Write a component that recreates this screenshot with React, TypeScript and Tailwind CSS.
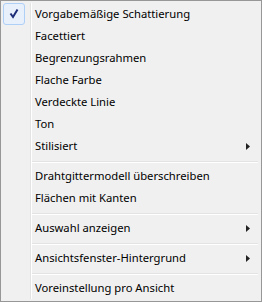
import React from "react";

type Entry =
  | { kind: "item"; label: string; checked?: boolean; sub?: boolean }
  | { kind: "sep" };

const entries: Entry[] = [
  { kind: "item", label: "Vorgabemäßige Schattierung", checked: true },
  { kind: "item", label: "Facettiert" },
  { kind: "item", label: "Begrenzungsrahmen" },
  { kind: "item", label: "Flache Farbe" },
  { kind: "item", label: "Verdeckte Linie" },
  { kind: "item", label: "Ton" },
  { kind: "item", label: "Stilisiert", sub: true },
  { kind: "sep" },
  { kind: "item", label: "Drahtgittermodell überschreiben" },
  { kind: "item", label: "Flächen mit Kanten" },
  { kind: "sep" },
  { kind: "item", label: "Auswahl anzeigen", sub: true },
  { kind: "sep" },
  { kind: "item", label: "Ansichtsfenster-Hintergrund", sub: true },
  { kind: "sep" },
  { kind: "item", label: "Voreinstellung pro Ansicht" },
];

function Gutter() {
  return (
    <div className="flex h-full">
      <div className="w-px bg-[#e2e3e3]" />
      <div className="w-px bg-white" />
    </div>
  );
}

export default function App() {
  return (
    <div
      className="w-[262px] h-[302px] border border-[#979797] bg-[#f0f0f0] p-[2px] flex flex-col text-[11.25px] text-black"
      style={{ fontFamily: '"Segoe UI", "Noto Sans", "Open Sans", sans-serif' }}
    >
      {entries.map((e, i) =>
        e.kind === "sep" ? (
          <div key={i} className="flex h-[8px]">
            <div className="w-[27px]" />
            <Gutter />
            <div className="flex-1 flex flex-col pt-[4px] pr-[1px]">
              <div className="h-px bg-[#e2e3e3]" />
              <div className="h-px bg-white" />
            </div>
          </div>
        ) : (
          <div key={i} className="flex h-[22px] items-stretch">
            <div className="w-[27px] flex items-start">
              {e.checked ? (
                <div className="w-[22px] h-[22px] rounded-[3px] border border-[#aecff7] bg-[#e8f0fb] flex items-center justify-center">
                  <svg width="14" height="14" viewBox="0 0 14 14">
                    <path
                      d="M3.5 6.5 L6 10 L10.5 2.5"
                      fill="none"
                      stroke="#1e2d78"
                      strokeWidth="2"
                      strokeLinejoin="miter"
                    />
                  </svg>
                </div>
              ) : null}
            </div>
            <Gutter />
            <div className="flex-1 flex items-center pl-[3px] pr-[9px]">
              <span className="flex-1 leading-none whitespace-nowrap">{e.label}</span>
              {e.sub ? (
                <svg width="4" height="7" viewBox="0 0 4 7">
                  <path d="M0 0 L4 3.5 L0 7 Z" fill="#222" />
                </svg>
              ) : null}
            </div>
          </div>
        )
      )}
    </div>
  );
}
